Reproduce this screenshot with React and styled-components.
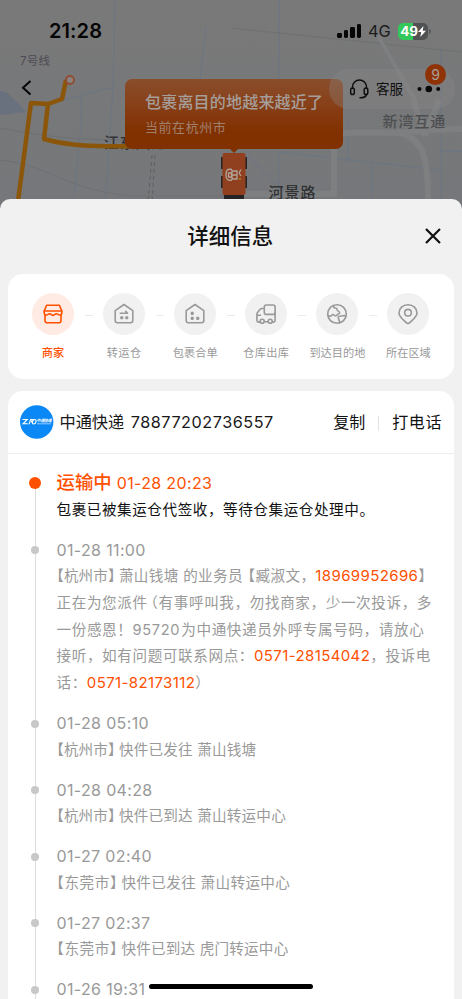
import React from 'react';
import styled, { createGlobalStyle } from 'styled-components';

const GlobalStyle = createGlobalStyle`
  * {
    box-sizing: border-box;
  }

  body {
    margin: 0;
    background: #f1f1f1;
    font-family: Inter, "Noto Sans CJK SC", sans-serif;
    -webkit-font-smoothing: antialiased;
  }
`;

const Phone = styled.div`
  position: relative;
  width: 462px;
  height: 999px;
  overflow: hidden;
  display: flex;
  flex-direction: column;
  background: #76787b;
`;

const Header = styled.header`
  position: relative;
  height: 199px;
  flex: none;
`;

const MapLayer = styled.svg`
  position: absolute;
  top: 0;
  left: 0;
`;

const MapLabel = styled.span`
  position: absolute;
  left: ${(p) => p.$x}px;
  top: ${(p) => p.$y}px;
  font-size: ${(p) => p.$size || 15}px;
  line-height: 20px;
  font-weight: ${(p) => p.$weight || 400};
  letter-spacing: ${(p) => p.$gap || 0}px;
  color: ${(p) => p.$color || '#323437'};
  white-space: nowrap;
`;

const StatusBar = styled.div`
  position: relative;
  display: flex;
  align-items: center;
  height: 62px;
  padding: 0 34px 0 49px;
`;

const Clock = styled.div`
  flex: 1;
  font-size: 20px;
  font-weight: 600;
  letter-spacing: 0.1px;
  color: #050505;
`;

const Signal = styled.div`
  display: flex;
  align-items: flex-end;
  gap: 2.3px;
  margin-right: 7px;
`;

const Bar = styled.i`
  width: 4.2px;
  height: ${(p) => p.$h}px;
  border-radius: 1.4px;
  background: #060606;
`;

const Network = styled.div`
  width: 30px;
  font-size: 16.4px;
  color: #1c1c1c;
`;

const Battery = styled.div`
  position: relative;
  display: flex;
  align-items: center;
  justify-content: center;
  width: 30px;
  height: 17px;
  border-radius: 5px;
  background: linear-gradient(to right, #34c759 49%, #505153 49%);
  color: #fff;
  font-size: 13.5px;
  font-weight: 700;
  letter-spacing: -0.3px;

  &::after {
    content: '';
    position: absolute;
    right: -3px;
    top: 6px;
    width: 2px;
    height: 5px;
    border-radius: 0 2px 2px 0;
    background: #5a5b5d;
  }
`;

const Bubble = styled.div`
  position: absolute;
  left: 125px;
  top: 79px;
  width: 218px;
  height: 70px;
  padding: 11px 0 0 20px;
  border-radius: 7px;
  background: linear-gradient(#8a4e2c, #863a10 50%, #813100 75%);

  &::after {
    content: '';
    position: absolute;
    left: 105px;
    top: 70px;
    border: 4px solid transparent;
    border-top-color: #813100;
    border-bottom: 0;
  }
`;

const BubbleTitle = styled.div`
  font-size: 16px;
  line-height: 24px;
  font-weight: 500;
  letter-spacing: 0.2px;
  color: #a59e9a;
`;

const BubbleText = styled.div`
  margin-top: 3px;
  font-size: 13px;
  line-height: 20px;
  letter-spacing: 0.55px;
  color: #a17f6d;
`;

const NavBar = styled.div`
  position: relative;
  display: flex;
  align-items: center;
  justify-content: space-between;
  height: 40px;
  margin-top: 7px;
  padding: 0 7px 0 21px;
`;

const BackIcon = styled.svg`
  margin-bottom: 2px;
`;

const ServicePill = styled.div`
  display: flex;
  align-items: center;
  width: 126px;
  height: 40px;
  padding-left: 20px;
  border-radius: 20px;
  background: rgba(139, 140, 140, 0.3);
  font-size: 13.5px;
  color: #101010;

  span {
    margin: 0 14px 2px 6px;
  }
`;

const Badge = styled.div`
  position: absolute;
  right: 16px;
  top: -5.5px;
  width: 21px;
  height: 21px;
  border-radius: 50%;
  background: #8f3205;
  color: #a7a09c;
  font-size: 14px;
  line-height: 21px;
  text-align: center;
`;

const Sheet = styled.main`
  position: relative;
  flex: 1;
  display: flex;
  flex-direction: column;
  padding: 0 8px 0 7.5px;
  border-radius: 10px 10px 0 0;
  background: #f1f1f1;
`;

const SheetHeader = styled.div`
  display: grid;
  grid-template-columns: 1fr auto 1fr;
  align-items: center;
  height: 75px;
  padding: 0 13.5px 1px 12.5px;
`;

const SheetTitle = styled.h1`
  grid-column: 2;
  margin: 0;
  font-size: 21.5px;
  line-height: 30px;
  font-weight: 500;
  color: #111;
`;

const CloseIcon = styled.svg`
  justify-self: end;
`;

const Card = styled.section`
  flex: none;
  border-radius: 15px;
  background: #fff;
`;

const StepsCard = styled(Card)`
  display: flex;
  align-items: flex-start;
  height: 105px;
  padding: 19.4px 10px 0;
`;

const Step = styled.div`
  position: relative;
  display: flex;
  flex-direction: column;
  align-items: center;
  flex: 1;
  color: ${(p) => (p.$active ? '#ff5000' : '#999')};

  &:not(:first-child)::before {
    content: '';
    position: absolute;
    left: -4px;
    top: 21.6px;
    width: 8px;
    height: 1.5px;
    background: #ececec;
  }
`;

const StepCircle = styled.div`
  display: flex;
  align-items: center;
  justify-content: center;
  width: 42px;
  height: 42px;
  border-radius: 50%;
  background: ${(p) => (p.$active ? '#ffebe4' : '#f1f1f1')};
`;

const StepLabel = styled.div`
  margin-top: 8.6px;
  font-size: 11.2px;
  line-height: 18px;
  font-weight: ${(p) => (p.$active ? 500 : 400)};
  letter-spacing: ${(p) => p.$gap || 0}px;
  white-space: nowrap;
`;

const TrackCard = styled(Card)`
  height: 640px;
  margin-top: 12px;
`;

const Courier = styled.div`
  display: flex;
  align-items: center;
  height: 63px;
  padding: 0 12px 0 12px;
  border-bottom: 1px solid #efefef;
  font-size: 16.2px;
  color: #181818;
  white-space: nowrap;
`;

const CourierName = styled.div`
  flex: 1;
  margin: -2px 0 0 6px;

  span {
    margin-left: 6.5px;
    letter-spacing: 0.55px;
  }
`;

const Action = styled.button`
  margin-top: -2px;
  padding: 0;
  border: 0;
  background: none;
  font: inherit;
  font-size: 16px;
  letter-spacing: ${(p) => p.$gap || 0}px;
  color: #111;
`;

const Divider = styled.i`
  width: 1px;
  height: 15px;
  margin: 2px 13px 0 13px;
  background: #e2e2e2;
`;

const Timeline = styled.ol`
  margin: 0;
  padding: 16px 0 0 27.5px;
  list-style: none;
`;

const Event = styled.li`
  position: relative;
  padding: 0 0 13.33px 21.5px;
  color: ${(p) => (p.$active ? '#111' : '#999')};

  &::before {
    content: '';
    position: absolute;
    left: -0.5px;
    top: 13px;
    width: 1px;
    height: 100%;
    background: #ddd;
  }

  &::after {
    content: '';
    position: absolute;
    left: ${(p) => (p.$active ? -6.2 : -4)}px;
    top: ${(p) => (p.$active ? 6.9 : 9.6)}px;
    width: ${(p) => (p.$active ? 12.6 : 8)}px;
    height: ${(p) => (p.$active ? 12.6 : 8)}px;
    border-radius: 50%;
    background: ${(p) => (p.$active ? '#ff5000' : '#c8c8c8')};
  }
`;

const EventTime = styled.div`
  height: 26.67px;
  font-size: 16px;
  line-height: 26.67px;
  letter-spacing: 0.35px;
  color: ${(p) => (p.$active ? '#ff5000' : '#999')};
  white-space: nowrap;

  b {
    margin-right: 5px;
    font-size: 18.4px;
    line-height: 20px;
    font-weight: 500;
    letter-spacing: 0;
  }
`;

const Line = styled.div`
  height: 26.67px;
  font-size: 14.6px;
  line-height: 26.67px;
  letter-spacing: ${(p) => p.$gap ?? 0.55}px;
  white-space: nowrap;
`;

const Half = styled.span`
  margin-left: ${(p) => p.$before || 0}px;
  font-feature-settings: 'halt';
`;

const CityName = styled.span`
  margin-right: 3.5px;
  letter-spacing: ${(p) => p.$gap ?? 0.1}px;
`;

const Digits = styled.span`
  margin-right: 1px;
  letter-spacing: 0.7px;
`;

const Tel = styled.a`
  font-size: 15px;
  letter-spacing: 0.38px;
  color: #ff5000;
`;

const HomeIndicator = styled.div`
  position: absolute;
  left: 149px;
  top: 984px;
  width: 164px;
  height: 5.4px;
  border-radius: 3px;
  background: #000;
`;

function StepIcon({ children }) {
  return (
    <svg width="22" height="22" viewBox="0 0 22 22" fill="none" stroke="currentColor"
      strokeWidth="1.6" strokeLinejoin="round" strokeLinecap="round">
      {children}
    </svg>
  );
}

const steps = [
  {
    label: '商家',
    icon: (
      <>
        <path d="M4.6 2.3h12.8l2.4 5.8v1.6c0 1.5-.9 2.3-2.2 2.3-1.5 0-1.8-1.3-3.2-1.3-1.3 0-1.7 1.7-3.4 1.7s-2.1-1.7-3.4-1.7c-1.4 0-1.7 1.3-3.2 1.3-1.3 0-2.200-.8-2.200-2.300V8.100z" />
        <path d="M2.200 8h17.600M3 12v5.400c0 1.400.8 2.300 2.200 2.300h11.600c1.400 0 2.200-.9 2.200-2.300V12" />
      </>
    ),
  },
  {
    label: '转运仓',
    gap: 0.4,
    icon: (
      <>
        <path d="M2.200 7.600 11 1.500l8.800 6.100v10c0 1.300-.8 2.100-2.100 2.100H4.300c-1.300 0-2.100-.8-2.100-2.100z" />
        <path d="M7.300 10.300h7.200l-1.800-1.900" />
        <path d="M8 14h1.500v1.500H8zM13 14h1.500v1.500H13z" fill="currentColor" />
      </>
    ),
  },
  {
    label: '包裹合单',
    icon: (
      <>
        <path d="M2.200 7.600 11 1.500l8.800 6.100v10c0 1.300-.8 2.100-2.100 2.100H4.300c-1.300 0-2.100-.8-2.100-2.100z" />
        <path d="M7.500 9.600H9v1.500H7.500zM7.500 14.600H9v1.500H7.500zM13 14.600h1.500v1.500H13z" fill="currentColor" />
      </>
    ),
  },
  {
    label: '仓库出库',
    gap: 0.3,
    icon: (
      <>
        <path d="M9.300 5.500H6.800c-.8 0-1.300.3-1.800 1L2.500 9.600c-.4.500-.6 1-.6 1.600v6.300c0 1 .6 1.600 1.600 1.600h1.600M9.300 18.700h3.800M17.300 19.100h1.200c.9 0 1.600-.7 1.600-1.600V10M1.900 12.200h3.600" />
        <rect x="9.300" y="2" width="10.800" height="9.400" rx="2" />
        <circle cx="7.200" cy="18.300" r="2" />
        <circle cx="15.200" cy="18.300" r="2" />
      </>
    ),
  },
  {
    label: '到达目的地',
    icon: (
      <>
        <circle cx="11" cy="11" r="9.300" />
        <path d="M7.600 2.500c-.2 1.700.5 2.500 1.900 2.500 1.600.1 1.700 1 1.700 2 .1 1.300 2.600 1 2.400 2.900-.2 1.400-1.600.9-2.300 1.900-.8 1.100-2 1.400-3 .4-.9-1-2.100-.9-2.600.2-.6 1.100-2 1-3.500.3M20 13c-1.800-.9-3 .1-4.600 0-2.700-.2-3.900 1.400-2.800 3 .8 1.200 1.300 2.300.7 4" />
      </>
    ),
  },
  {
    label: '所在区域',
    icon: (
      <>
        <path d="M11 1.700c5.300 0 9 3.600 9 8.400 0 3.600-3.500 6-6.900 9.300-1.400 1.400-2.800 1.400-4.200 0C5.500 16.100 2 13.700 2 10.100c0-4.800 3.700-8.400 9-8.400z" />
        <circle cx="11" cy="9.700" r="3.300" />
      </>
    ),
  },
];

const events = [
  { time: '01-28 05:10', city: '杭州市', text: '快件已发往 萧山钱塘' },
  { time: '01-28 04:28', city: '杭州市', text: '快件已到达 萧山转运中心' },
  { time: '01-27 02:40', city: '东莞市', text: '快件已发往 萧山转运中心', cityGap: 0.6, gap: 0.35 },
  { time: '01-27 02:37', city: '东莞市', text: '快件已到达 虎门转运中心', cityGap: 0.6 },
];

function City({ gap, children }) {
  return (
    <CityName $gap={gap}>
      <Half>【</Half>
      {children}
      <Half>】</Half>
    </CityName>
  );
}

function MapRoads() {
  return (
    <MapLayer width="462" height="210" viewBox="0 0 462 210" fill="none">
      <defs>
        <linearGradient id="sky" x1="0" y1="0" x2="0" y2="1">
          <stop offset="0" stopColor="#797979" />
          <stop offset="1" stopColor="#75777a" />
        </linearGradient>
      </defs>
      <path d="M0 0h462v210H0z" fill="url(#sky)" />
      <path d="M0 91c8 0 10 6 16 10l10 11-26 3z" fill="#69717e" />
      <g stroke="#6e7681" strokeWidth="1.3">
        <path d="M115 0 113 88 105 210M81 94v30l-8 86M48 104l30-8 36-9M206 28l-6 52M279 0v80M279 152l161 18M279 152v47M372 164v35M441 50v149M441 151h21M231 157h17l30 28M348 122v40" />
      </g>
      <path d="M0 128c70 14 105 11 155 13M0 160c50 5 60 28 130 36h95M231 28l231 24" stroke="#6f7073" strokeWidth="1" />
      <g stroke="#7e7f80">
        <path d="M378 36l38 66" strokeWidth="4" />
        <path d="M336 134c40-4 60 2 92-4l34-1M334 146v48h-90M425 136l-12-36M425 136l14-36" strokeWidth="6" />
        <path d="M397 132c24 5 31 20 31 67" strokeWidth="6" />
      </g>
      <path d="M152 155l-4 48M155 155l-3 48" stroke="#5d5f61" strokeDasharray="4 3" />
    </MapLayer>
  );
}

function MapRoute() {
  return (
    <MapLayer width="462" height="210" viewBox="0 0 462 210" fill="none">
      <path d="M18 201 31 103l17 1 14-5 4-19M48 104l-4 35c25 7 50 8 94 7" stroke="#8b560a" strokeWidth="4.5" strokeLinejoin="round" />
      <circle cx="70" cy="80" r="4" fill="#898483" stroke="#914d34" strokeWidth="2" />
      <path d="M221 157h4v12h-4zM221 176h4v12h-4zM243 157h4v12h-4zM243 176h4v12h-4zM224 194h20v8h-20z" fill="#252323" />
      <rect x="222.500" y="153" width="23" height="42" rx="2" fill="#91401f" />
      <path d="M232 169.500c-5-1-6 1-6 5.500s2 6 6 5M228.500 173h3v4h-3zM232 171h5v8h-5zM232 175h5M241 169.500l-2 3.500M239 173l2 3" stroke="#b0a49d" strokeWidth="1.300" />
      <circle cx="240" cy="179" r="1" fill="#a58a1c" />
    </MapLayer>
  );
}

export default function App() {
  return (
    <>
      <GlobalStyle />
      <Phone>
        <Header>
          <MapRoads />
          <MapLabel $x={20} $y={51} $size={11.5} $gap={0.2} $color="#4e4b54">7号线</MapLabel>
          <MapLabel $x={104} $y={133} $size={15} $weight={500} $gap={0.8}>江东大道</MapLabel>
          <MapLabel $x={382.5} $y={112} $size={15} $weight={500} $gap={0.9} $color="#4d4e50">新湾互通</MapLabel>
          <MapLabel $x={268.5} $y={183} $size={15} $weight={500} $gap={1} $color="#303234">河景路</MapLabel>
          <MapRoute />
          <Bubble>
            <BubbleTitle>包裹离目的地越来越近了</BubbleTitle>
            <BubbleText>当前在杭州市</BubbleText>
          </Bubble>
          <StatusBar>
            <Clock>21:28</Clock>
            <Signal>
              <Bar $h={5.5} />
              <Bar $h={8} />
              <Bar $h={11.5} />
              <Bar $h={14.5} />
            </Signal>
            <Network>4G</Network>
            <Battery>
              49
              <svg width="8" height="11" viewBox="0 0 8 11">
                <path d="M5.500 0 0 6h3.200L2.300 11 8 4.700H4.700z" fill="#fff" />
              </svg>
            </Battery>
          </StatusBar>
          <NavBar>
            <BackIcon width="12" height="18" viewBox="0 0 12 18" fill="none" stroke="#050505" strokeWidth="2">
              <path d="M9.500 2 2 8.700l7.500 6.800" />
            </BackIcon>
            <ServicePill>
              <svg width="21" height="20" viewBox="0 0 21 20" fill="none" stroke="#101010" strokeWidth="1.500" strokeLinecap="round">
                <path d="M3.500 9.500V8a7 7 0 0 1 14 0v1.500" />
                <rect x="1.700" y="9" width="3.600" height="6.500" rx="1.800" />
                <rect x="15.200" y="9" width="3.600" height="6.500" rx="1.800" />
                <path d="M17.500 15.500c-.5 2.500-2.500 3.300-6.500 3.300" />
              </svg>
              <span>客服</span>
              <svg width="24" height="8" viewBox="0 0 24 8" fill="#080808">
                <circle cx="2.500" cy="4" r="2" />
                <circle cx="11.800" cy="4" r="3.300" />
                <circle cx="21.200" cy="4" r="2" />
              </svg>
            </ServicePill>
            <Badge>9</Badge>
          </NavBar>
        </Header>
        <Sheet>
          <SheetHeader>
            <SheetTitle>详细信息</SheetTitle>
            <CloseIcon width="16" height="16" viewBox="0 0 16 16" stroke="#111" strokeWidth="2.200">
              <path d="m1 1 14 14M15 1 1 15" />
            </CloseIcon>
          </SheetHeader>
          <StepsCard>
            {steps.map((step, i) => (
              <Step key={step.label} $active={i === 0}>
                <StepCircle $active={i === 0}>
                  <StepIcon>{step.icon}</StepIcon>
                </StepCircle>
                <StepLabel $active={i === 0} $gap={step.gap}>{step.label}</StepLabel>
              </Step>
            ))}
          </StepsCard>
          <TrackCard>
            <Courier>
              <svg width="34" height="34" viewBox="0 0 34 34">
                <circle cx="16.700" cy="17" r="16.700" fill="#0a88f5" />
                <path d="M2.500 14.500h4.800l-4.300 4.300h4.800M9 19.300l1.600-4.800h3M12.200 14.500l-1 3M13.500 19c-2 0-1-4.500 1.300-4.500s1.300 4.500-1.300 4.500z" fill="none" stroke="#fff" strokeWidth="1.100" />
                <text x="16.500" y="17.300" fontSize="4" fontWeight="700" fill="#fff" textLength="15" fontStyle="italic">中通快递</text>
                <path d="M17 18.800h14" stroke="#b7dcff" strokeWidth="0.800" />
              </svg>
              <CourierName>
                中通快递<span>78877202736557</span>
              </CourierName>
              <Action>复制</Action>
              <Divider />
              <Action $gap={0.6}>打电话</Action>
            </Courier>
            <Timeline>
              <Event $active>
                <EventTime $active><b>运输中</b>01-28 20:23</EventTime>
                <Line>包裹已被集运仓代签收，等待仓集运仓处理中。</Line>
              </Event>
              <Event>
                <EventTime>01-28 11:00</EventTime>
                <Line $gap={0.35}>
                  <City>杭州市</City>萧山钱塘 的业务员<Half $before={5}>【</Half>臧淑文，<Tel>18969952696</Tel><Half>】</Half>
                </Line>
                <Line $gap={0.6}>正在为您派件<Half $before={3}>（</Half>有事呼叫我，勿找商家，少一次投诉，多</Line>
                <Line $gap={0.6}>一份感恩！<Digits>95720</Digits>为中通快递员外呼专属号码，请放心</Line>
                <Line $gap={0.6}>接听，如有问题可联系网点：<Tel>0571-28154042</Tel>，投诉电</Line>
                <Line>话：<Tel>0571-82173112</Tel><Half>）</Half></Line>
              </Event>
              {events.map((e) => (
                <Event key={e.time}>
                  <EventTime>{e.time}</EventTime>
                  <Line $gap={e.gap ?? 0.2}><City gap={e.cityGap}>{e.city}</City>{e.text}</Line>
                </Event>
              ))}
              <Event>
                <EventTime>01-26 19:31</EventTime>
              </Event>
            </Timeline>
          </TrackCard>
        </Sheet>
        <HomeIndicator />
      </Phone>
    </>
  );
}
